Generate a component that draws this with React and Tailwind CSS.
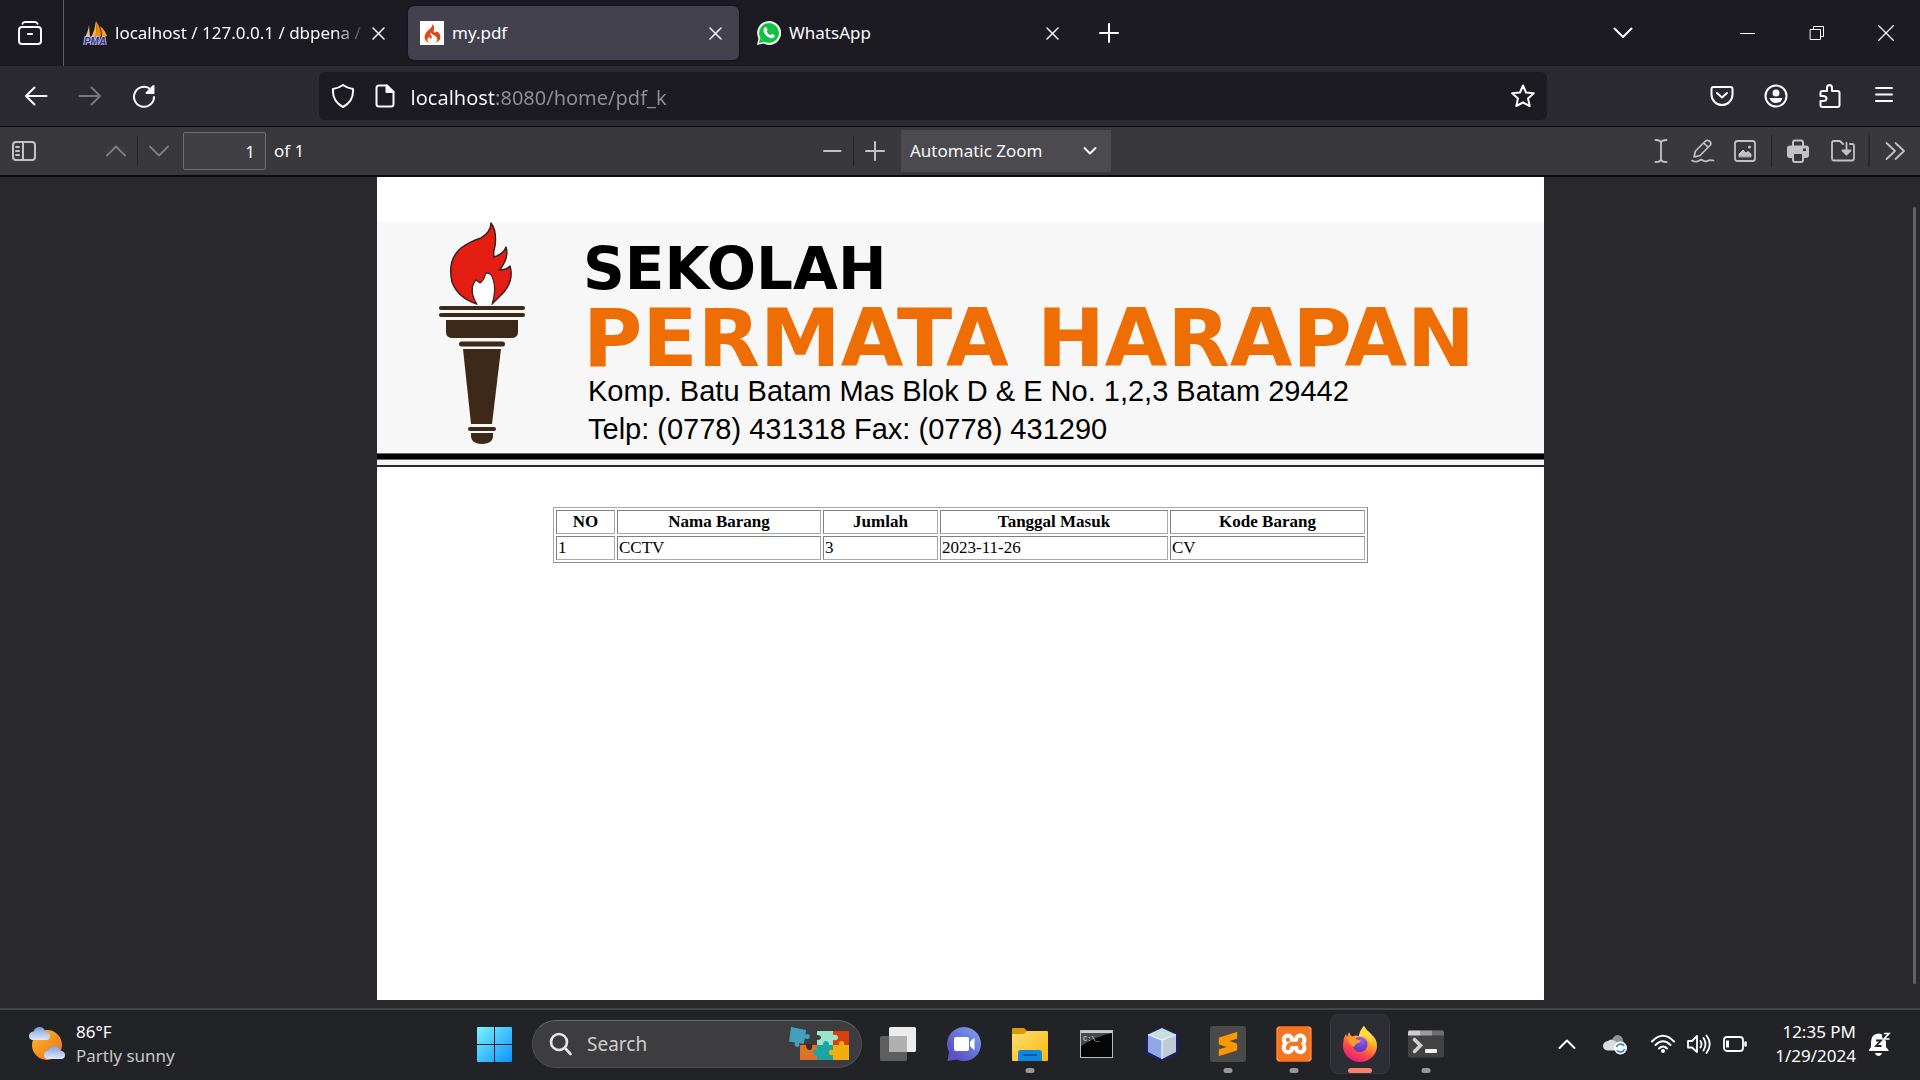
import React from "react";
import { SiCodeigniter, SiSublimetext, SiXampp } from "react-icons/si";

function Line({ size = "size-6", box = "0 0 24 24", w = 2, children }) {
  return (
    <svg
      className={`${size} shrink-0`}
      viewBox={box}
      fill="none"
      stroke="currentColor"
      strokeWidth={w}
      strokeLinecap="round"
      strokeLinejoin="round"
      aria-hidden="true"
    >
      {children}
    </svg>
  );
}

function IconButton({ label, className = "", children }) {
  return (
    <button type="button" aria-label={label} className={`flex items-center justify-center ${className}`}>
      {children}
    </button>
  );
}

function PmaIcon() {
  return (
    <svg className="size-6 shrink-0" viewBox="0 0 24 24" aria-hidden="true">
      <path d="M6 4 Q6.500 11 7 16 L1 18 Q5 12 6 4Z" fill="#f6c27c" />
      <path d="M13 0 Q12 9 8 17 L12.500 16.500 Q14 8 13 0Z" fill="#fbb34a" />
      <path d="M13 0 Q18 7 18 15 L12.500 16.500 Q14 8 13 0Z" fill="#f38a06" />
      <path d="M17 5 Q22 9 24 15 L19 16 Q19 10 17 5Z" fill="#f89c1e" />
      <text
        x="12"
        y="23.500"
        textAnchor="middle"
        className="font-['Liberation_Sans',sans-serif] text-[10px] font-bold italic"
        fill="#34357c"
        stroke="#b9bbe0"
        strokeWidth="2"
        paintOrder="stroke"
      >
        PMA
      </text>
    </svg>
  );
}

function Tab({ icon, title, active, fade }) {
  return (
    <div
      className={`flex h-[54px] w-[331px] items-center rounded-md pr-[14px] pl-3 ${
        active ? "bg-[#42414d] shadow-[0_0_3px_rgba(0,0,0,0.6)]" : ""
      }`}
    >
      {icon}
      <button
        type="button"
        className={`ml-2 min-w-0 flex-1 overflow-hidden text-left text-[17px] whitespace-nowrap text-[#fbfbfe] ${
          fade ? "[mask-image:linear-gradient(90deg,black_86%,transparent_100%)]" : ""
        }`}
      >
        {title}
      </button>
      <IconButton label={`Close ${title}`} className="h-9 w-5">
        <Line size="size-[13px]" box="0 0 13 13" w={1.500}>
          <path d="M1 1 L12 12 M12 1 L1 12" />
        </Line>
      </IconButton>
    </div>
  );
}

function TabBar() {
  return (
    <header className="flex h-[66px] items-center bg-[#1c1b22] text-[#fbfbfe]">
      <IconButton label="View recent browsing" className="h-full w-16 border-r border-[#5b5b66] pr-1">
        <Line>
          <path d="M4.500 2.800 Q5 1 7 1 H17 Q19 1 19.500 2.800" />
          <rect x="1" y="6" width="22" height="17" rx="3" />
          <path d="M10 13 H14" />
        </Line>
      </IconButton>
      <nav className="ml-[7px] flex gap-[6px]" aria-label="Tabs">
        <Tab icon={<PmaIcon />} title="localhost / 127.0.0.1 / dbpena /" fade />
        <Tab
          active
          title="my.pdf"
          icon={
            <span className="flex size-6 items-center justify-center bg-white">
              <SiCodeigniter className="size-[19px] text-[#dd4814]" />
            </span>
          }
        />
        <Tab
          title="WhatsApp"
          icon={
            <svg className="size-6 shrink-0" viewBox="0 0 24 24" aria-hidden="true">
              <path d="M12 0 A12 12 0 1 1 6.500 22.600 L0 24 L1.500 17.500 A12 12 0 0 1 12 0Z" fill="#f4f8f4" />
              <circle cx="12" cy="12" r="10" fill="#12c143" />
              <path d="M3 17 L2 22 L7 21Z" fill="#12c143" />
              <path
                d="M8.200 6 Q9.300 5.700 9.700 6.700 L10.500 8.700 Q10.700 9.400 9.600 10.500 Q11 13.200 13.600 14.300 L14.800 13 Q15.200 12.700 17.600 14.200 Q18 14.600 17.600 15.600 Q16.600 17.700 14 17.300 Q8.500 15.600 6.600 10.600 Q5.900 7.600 8.200 6Z"
                fill="#fff"
              />
            </svg>
          }
        />
      </nav>
      <IconButton label="New tab" className="ml-[9px] size-12">
        <Line size="size-5" box="0 0 20 20">
          <path d="M1 10 H19 M10 1 V19" />
        </Line>
      </IconButton>
      <div className="flex-1" />
      <IconButton label="List all tabs" className="mr-[66px] size-12">
        <Line size="size-5" box="0 0 20 20">
          <path d="M1.500 5.500 L10 14 L18.500 5.500" />
        </Line>
      </IconButton>
      <IconButton label="Minimize" className="h-full w-[69px]">
        <span className="h-px w-[15px] bg-white" />
      </IconButton>
      <IconButton label="Restore" className="h-full w-[69px]">
        <Line size="size-4" box="0 0 16 16" w={1}>
          <path d="M1.500 4.500 H11.500 V14.500 H1.500Z M4.500 4.500 V1.500 H14.500 V11.500 H11.500" />
        </Line>
      </IconButton>
      <IconButton label="Close window" className="h-full w-[69px]">
        <Line size="size-4" box="0 0 16 16" w={1.200}>
          <path d="M0.500 0.500 L15.500 15.500 M15.500 0.500 L0.500 15.500" />
        </Line>
      </IconButton>
    </header>
  );
}

function NavBar() {
  return (
    <div className="flex h-[61px] items-center border-b border-[#0c0c0d] bg-[#2b2a33] px-3 text-[#fbfbfe]">
      <div className="flex gap-[6px]">
        <IconButton label="Back" className="size-12">
          <Line>
            <path d="M2 12 H22.500 M10.500 3.500 L2 12 L10.500 20.500" />
          </Line>
        </IconButton>
        <IconButton label="Forward" className="size-12 text-[#77767e]">
          <Line>
            <path d="M1.500 12 H22 M13.500 3.500 L22 12 L13.500 20.500" />
          </Line>
        </IconButton>
        <IconButton label="Reload" className="size-12">
          <Line>
            <path d="M22 13 A10 10 0 1 1 18.500 5.200" />
            <path d="M21.500 2 V9 H14.500Z" fill="currentColor" />
          </Line>
        </IconButton>
      </div>
      <div className="flex-1" />
      <div className="flex h-12 flex-[8] items-center rounded-md bg-[#1c1b22] pr-3 pl-3">
        <IconButton label="Tracking protection">
          <Line>
            <path d="M12 1 Q16 4 22 5 Q23 17 12 23 Q1 17 2 5 Q8 4 12 1Z" />
          </Line>
        </IconButton>
        <IconButton label="Site information" className="ml-[18px]">
          <Line>
            <path d="M14 1.500 H6 Q3.500 1.500 3.500 4 V20 Q3.500 22.500 6 22.500 H18 Q20.500 22.500 20.500 20 V8Z" />
            <path d="M13.500 1.500 V8 H20.500Z" fill="currentColor" />
          </Line>
        </IconButton>
        <input
          type="text"
          aria-label="Address"
          defaultValue="localhost:8080/home/pdf_k"
          className="ml-[14px] h-12 min-w-0 flex-1 bg-[linear-gradient(90deg,#fbfbfe_84px,#8f8f98_84px)] bg-clip-text pt-[2px] text-[20px] text-transparent outline-none"
        />
        <IconButton label="Bookmark this page">
          <Line>
            <path d="M12 1.500 L15 8.500 L22.800 9.200 L17 14.400 L18.700 22 L12 18.500 L5.300 22 L7 14.400 L1.200 9.200 L9 8.500Z" />
          </Line>
        </IconButton>
      </div>
      <div className="flex-1" />
      <div className="flex gap-[6px]">
        <IconButton label="Save to Pocket" className="size-12">
          <Line>
            <path d="M3.500 3 H20.500 Q22.500 3 22.500 5 V10.500 A10.500 10.500 0 0 1 1.500 10.500 V5 Q1.500 3 3.500 3Z" />
            <path d="M7 9 L12 13.500 L17 9" />
          </Line>
        </IconButton>
        <IconButton label="Account" className="size-12">
          <Line>
            <circle cx="12" cy="12" r="10.500" />
            <circle cx="12" cy="9" r="3.500" fill="currentColor" stroke="none" />
            <path d="M5.500 14 H18.500 Q17 19 12 19 Q7 19 5.500 14Z" fill="currentColor" stroke="none" />
          </Line>
        </IconButton>
        <IconButton label="Extensions" className="size-12">
          <Line>
            <path d="M2.500 12 V9 Q2.500 7 4.500 7 H9 V4 Q9 1 11.500 1 Q14 1 14 4 V7 H19.500 Q21.500 7 21.500 9 V21 Q21.500 23 19.500 23 H4.500 Q2.500 23 2.500 21 V17 H5 Q8.500 17 8.500 14.500 Q8.500 12 5 12Z" />
          </Line>
        </IconButton>
        <IconButton label="Open application menu" className="size-12">
          <Line>
            <path d="M4 4 H20 M4 10.500 H20 M4 17 H20" />
          </Line>
        </IconButton>
      </div>
    </div>
  );
}

function PdfToolbar() {
  return (
    <div className="grid h-[50px] grid-cols-[1fr_auto_1fr] items-center border-b-2 border-[#0c0c0d] bg-[#38383d] text-[17px] text-[#f9f9fa]">
      <div className="flex items-center pl-[3px]">
        <IconButton label="Toggle sidebar" className="size-[42px] text-[#c2c2c4]">
          <Line>
            <rect x="1" y="3" width="22" height="18" rx="3" />
            <path d="M11 3 V21 M4 8 H7 M4 12 H7 M4 16 H7" />
          </Line>
        </IconButton>
        <IconButton label="Previous page" className="ml-[50px] size-[42px] text-[#808084]">
          <Line size="size-5" box="0 0 20 20" w={1.800}>
            <path d="M1 14.500 L10 5.500 L19 14.500" />
          </Line>
        </IconButton>
        <span className="h-[30px] w-px bg-[#232327]" />
        <IconButton label="Next page" className="size-[42px] text-[#808084]">
          <Line size="size-5" box="0 0 20 20" w={1.800}>
            <path d="M1 5.500 L10 14.500 L19 5.500" />
          </Line>
        </IconButton>
        <label className="ml-[3px] flex items-center gap-2">
          <input
            type="text"
            aria-label="Page"
            defaultValue="1"
            className="h-[38px] w-[83px] rounded-[2px] border border-[#6f6f74] bg-[#404044] pr-[10px] text-right outline-none"
          />
          of 1
        </label>
      </div>
      <div className="flex items-center pl-[2px]">
        <IconButton label="Zoom out" className="size-[42px] text-[#c2c2c4]">
          <Line size="size-5" box="0 0 20 20">
            <path d="M2 10 H18.500" />
          </Line>
        </IconButton>
        <span className="h-[30px] w-px bg-[#232327]" />
        <IconButton label="Zoom in" className="size-[42px] text-[#c2c2c4]">
          <Line size="size-5" box="0 0 20 20">
            <path d="M1 10 H19 M10 1 V19" />
          </Line>
        </IconButton>
        <div className="relative ml-[5px]">
          <select
            aria-label="Zoom"
            className="h-[42px] w-[210px] appearance-none bg-[#4a4a4f] pl-[9px] outline-none"
          >
            <option>Automatic Zoom</option>
          </select>
          <span className="pointer-events-none absolute top-[13px] right-[13px]">
            <Line size="size-4" box="0 0 16 16">
              <path d="M2.500 5 L8 10.500 L13.500 5" />
            </Line>
          </span>
        </div>
      </div>
      <div className="flex items-center justify-end pr-1 text-[#c2c2c4]">
        <IconButton label="Text" className="size-[42px]">
          <Line w={1.800}>
            <path d="M6.500 1 Q12 1 12 4 Q12 1 17.500 1 M12 4 V20 M6.500 23 Q12 23 12 20 Q12 23 17.500 23" />
          </Line>
        </IconButton>
        <IconButton label="Draw" className="size-[42px]">
          <Line w={1.700}>
            <path d="M3 18 L4.500 12 L14.500 2 Q16.500 0.500 18.500 2.200 Q21 4.500 19 6.500 L9 16.500Z M12.800 4 L17 8.200" />
            <path d="M1 21.500 Q5 24 8.500 21.500 Q10 20 12 21.500 Q14 23 16 22 Q19 20.500 22.500 21.500" />
          </Line>
        </IconButton>
        <IconButton label="Add or edit images" className="size-[42px]">
          <Line w={1.800}>
            <rect x="2" y="2" width="20" height="20" rx="2.500" />
            <path d="M6 17.500 V15 L10 11 L13 14 L15 12.500 L18 15 V17.500Z" fill="currentColor" strokeWidth="1" />
            <circle cx="16.500" cy="8" r="1.500" fill="currentColor" stroke="none" />
          </Line>
        </IconButton>
        <span className="mx-[5px] h-8 w-px bg-[#232327]" />
        <IconButton label="Print" className="size-[42px]">
          <svg className="size-6" viewBox="0 0 24 24" aria-hidden="true">
            <path d="M7 7 V3.500 Q7 1.500 9 1.500 H15 Q17 1.500 17 3.500 V7" fill="none" stroke="currentColor" strokeWidth="2" />
            <path
              d="M4 6.500 H20 Q23 6.500 23 9.500 V16 Q23 19 20 19 H18 V21 Q18 24 15 24 H9 Q6 24 6 21 V19 H4 Q1 19 1 16 V9.500 Q1 6.500 4 6.500Z M8 15 V21 Q8 22 9 22 H15 Q16 22 16 21 V15Z M17 9.500 V12 H20 V9.500Z"
              fill="currentColor"
              fillRule="evenodd"
            />
          </svg>
        </IconButton>
        <IconButton label="Save" className="ml-[3px] size-[42px]">
          <Line w={1.800}>
            <path d="M12 5 L9 2 H3 Q1 2 1 4 V19 Q1 21.500 3 21.500 H21 Q23 21.500 23 19 V7 Q23 5 21 5 H19" />
            <path d="M15.500 4 V12" />
            <path d="M11.500 11.500 H19.500 L15.500 15.500Z" fill="currentColor" />
          </Line>
        </IconButton>
        <span className="mx-1 h-8 w-[2px] bg-[#2a2a2e]" />
        <IconButton label="Tools" className="size-[42px]">
          <Line size="size-5" box="0 0 20 20" w={1.800}>
            <path d="M1.500 2 L10 10 L1.500 18 M10.500 2 L19 10 L10.500 18" />
          </Line>
        </IconButton>
      </div>
    </div>
  );
}

function Torch() {
  return (
    <svg className="h-[223px] w-[90px] shrink-0" viewBox="0 0 90 223" role="img" aria-label="Torch">
      <path
        d="M54 1 Q60 9 58 24 Q56 30 57 35 Q67 32 69 25 Q72 35 64 46 Q63 49 62 48 Q70 48 73 44 Q77 58 67 70 L55 82 Q60 66 55 55 Q53 51 49 51 Q48 58 43 61 L39 58 Q31 68 40 82 Q21 76 15 60 Q10 38 24 26 Q34 19 44 16 Q54 10 54 1Z"
        fill="#e41e13"
        stroke="#3b2020"
        strokeWidth="1.500"
        strokeLinejoin="round"
      />
      <path d="M40.500 82 Q32 68 39 59 L43 62 Q48 58 49 52 Q53 51 55 56 Q59 67 54.500 82Z" fill="#fff" />
      <g fill="#3d2918">
        <rect x="2" y="84" width="86" height="4" rx="2" />
        <rect x="2" y="91" width="86" height="4" rx="2" />
        <path d="M9 98 H81 V110 Q81 116 74 116 H16 Q9 116 9 110Z" />
        <rect x="22" y="119.500" width="46" height="5" rx="2.500" />
        <path d="M26 127 H64 L55 202 H34Z" />
        <rect x="31" y="205" width="28" height="4" rx="2" />
        <path d="M34 211 H56 V215 Q55 222 45 222 Q35 222 34 215Z" />
      </g>
    </svg>
  );
}

function Letterhead() {
  return (
    <div className="mt-[45px]">
      <div className="flex h-[231px] bg-[#f7f7f7] pl-[60px] text-black">
        <Torch />
        <div className="ml-14 whitespace-nowrap">
          <h1 className="pt-3 font-['DejaVu_Sans',Verdana,sans-serif] font-bold">
            <span className="block text-[58px] leading-[70px]">SEKOLAH</span>
            <span className="block text-[81px] leading-[68px] text-[#ee6e04]">PERMATA HARAPAN</span>
          </h1>
          <div className="pl-[5px] font-['Liberation_Sans',Arial,sans-serif] text-[29px] leading-[38px]">
            <p>Komp. Batu Batam Mas Blok D &amp; E No. 1,2,3 Batam 29442</p>
            <p>Telp: (0778) 431318 Fax: (0778) 431290</p>
          </div>
        </div>
      </div>
      <div className="flex h-[14px] flex-col border-b-2 border-[#2a2a2a] bg-[#f2f2f2]">
        <div className="h-[7px] border-y border-[#6b6b6b] bg-black" />
      </div>
    </div>
  );
}

const columns = ["NO", "Nama Barang", "Jumlah", "Tanggal Masuk", "Kode Barang"];
const rows = [["1", "CCTV", "3", "2023-11-26", "CV"]];
const cell =
  "h-6 border border-t-[#808080] border-l-[#808080] border-r-[#a9a9a9] border-b-[#a9a9a9] px-px py-0 leading-[22px]";

function ItemTable() {
  return (
    <table className="mx-auto mt-10 w-[815px] table-fixed border-separate border-spacing-[2px] border border-t-[#a9a9a9] border-r-[#8c8c8c] border-b-[#8c8c8c] border-l-[#a9a9a9] font-['Liberation_Serif','Times_New_Roman',serif] text-[17px] text-black">
      <colgroup>
        <col className="w-[59px]" />
        <col className="w-[204px]" />
        <col className="w-[115px]" />
        <col className="w-[228px]" />
        <col />
      </colgroup>
      <thead>
        <tr>
          {columns.map((c) => (
            <th key={c} scope="col" className={`${cell} text-center font-bold`}>
              {c}
            </th>
          ))}
        </tr>
      </thead>
      <tbody>
        {rows.map((r) => (
          <tr key={r[0]}>
            {r.map((v) => (
              <td key={v} className={cell}>
                {v}
              </td>
            ))}
          </tr>
        ))}
      </tbody>
    </table>
  );
}

function Viewer() {
  return (
    <main className="flex flex-1 bg-[#2a2a2e] pb-2">
      <div className="flex-1 pl-[5px]" />
      <article className="w-full max-w-[1167px] bg-white">
        <Letterhead />
        <ItemTable />
      </article>
      <div className="flex flex-1 justify-end pt-[30px] pr-1 pb-4">
        <div className="w-[3px] rounded-full bg-[#626266]" />
      </div>
    </main>
  );
}

function Cloud({ x, y }) {
  return (
    <g transform={`translate(${x} ${y})`}>
      <path d="M4 13 Q0 13 0 9 Q0 5 4.500 4.500 Q6 0 10.500 0 Q15 0 16 4.500 Q21 5 21 9 Q21 13 17 13Z" fill="url(#cloud)" />
    </g>
  );
}

function WeatherIcon() {
  return (
    <svg className="h-[34px] w-9 shrink-0" viewBox="0 0 36 34" aria-hidden="true">
      <defs>
        <linearGradient id="sun" x1="0" y1="0" x2="1" y2="1">
          <stop offset="0" stopColor="#f9bd2f" />
          <stop offset="1" stopColor="#ef6c12" />
        </linearGradient>
        <linearGradient id="cloud" x1="0" y1="0" x2="0" y2="1">
          <stop offset="0" stopColor="#7d9fdf" />
          <stop offset="1" stopColor="#dfe9fa" />
        </linearGradient>
      </defs>
      <circle cx="18" cy="18" r="15" fill="url(#sun)" />
      <Cloud x="0" y="0" />
      <Cloud x="15" y="19" />
    </svg>
  );
}

function TaskButton({ label, running, active, children }) {
  return (
    <button
      type="button"
      aria-label={label}
      className={`relative flex size-[60px] items-center justify-center rounded-lg ${
        active ? "border border-[#38393f] bg-[#2d2e34]" : ""
      }`}
    >
      {children}
      {running && (
        <span
          className={`absolute left-1/2 h-[5px] -translate-x-1/2 rounded-full ${
            active ? "bottom-0 w-6 bg-[#f5836b]" : "bottom-px w-[9px] bg-[#98989a]"
          }`}
        />
      )}
    </button>
  );
}

function Puzzle() {
  return (
    <svg className="h-9 w-[60px] shrink-0" viewBox="0 0 60 36" aria-hidden="true">
      <path d="M2 1 L17 4 L16.500 8.500 Q21 7 21 10.500 Q21 14 16 12.500 L14.500 18 L10 17 Q11.500 21 8 21 Q4.500 20 6 16.500 L0 15.500Z" fill="#43a0bd" />
      <path d="M11 19 H28 V34 H11Z" fill="#dd7328" />
      <path d="M17 18 Q17 24 20.500 24 Q24 24 23 18Z" fill="#3a2a24" />
      <path d="M28 5 H44 V19 H28 V14 Q32 14 32 11.500 Q32 9 28 9Z" fill="#9ce4c8" />
      <path d="M44 5 H60 V19 H44Z" fill="#d8410f" />
      <path d="M44 9 Q49 8 49 11.500 Q49 15 44 14Z" fill="#9ce4c8" />
      <path d="M28 19 H44 V34 H28 V29 Q24 30 24 26.500 Q24 23 28 24Z" fill="#1ba3a6" />
      <path d="M34 19 Q34 15 37 15 Q40 15 40 19Z" fill="#1ba3a6" />
      <path d="M44 19 H60 V34 H44 V29 Q40 30 40 26.500 Q40 23 44 24Z" fill="#f2ae10" />
      <path d="M50 19.500 Q49 15 52.500 15 Q56 15 55 19.500Z" fill="#f2ae10" />
    </svg>
  );
}

function TaskbarApps() {
  return (
    <div className="flex items-center">
      <TaskButton label="Start">
        <svg className="size-[35px]" viewBox="0 0 35 35" aria-hidden="true">
          <defs>
            <linearGradient id="win" x1="0" y1="0" x2="35" y2="35" gradientUnits="userSpaceOnUse">
              <stop offset="0" stopColor="#7cf3fe" />
              <stop offset="1" stopColor="#0a92fb" />
            </linearGradient>
          </defs>
          <path
            d="M1 0 H17 V17 H0 V1 Q0 0 1 0Z M18 0 H34 Q35 0 35 1 V17 H18Z M0 18 H17 V35 H1 Q0 35 0 34Z M18 18 H35 V34 Q35 35 34 35 H18Z"
            fill="url(#win)"
          />
        </svg>
      </TaskButton>
      <label className="mr-[6px] ml-2 flex h-12 w-[330px] items-center rounded-full border border-[#505052] border-t-[#67676a] bg-[#3d3d3f] pr-3 pl-4">
        <Line size="size-6" w={2.600}>
          <circle cx="10" cy="10" r="8" stroke="#e6e6e6" />
          <path d="M16 16 L21.500 22" stroke="#e6e6e6" />
        </Line>
        <input
          type="search"
          placeholder="Search"
          aria-label="Search"
          className="ml-[14px] min-w-0 flex-1 bg-transparent text-[19px] text-[#cfcfcf] outline-none placeholder:text-[#cfcfcf]"
        />
        <Puzzle />
      </label>
      <div className="flex gap-[6px]">
        <TaskButton label="Task view">
          <svg className="size-9" viewBox="0 0 36 36" aria-hidden="true">
            <rect x="9" y="1" width="27" height="25" rx="1.500" fill="#ececec" />
            <rect x="0" y="10" width="27" height="25" rx="1.500" fill="#5e5e5e" />
            <path d="M9 10 H27 V26 H9Z" fill="#b0b0b0" />
          </svg>
        </TaskButton>
        <TaskButton label="Chat">
          <svg className="size-9" viewBox="0 0 36 36" aria-hidden="true">
            <defs>
              <linearGradient id="chat" x1="0" y1="1" x2="1" y2="0">
                <stop offset="0.200" stopColor="#5b52c4" />
                <stop offset="1" stopColor="#7fa6f2" />
              </linearGradient>
            </defs>
            <path d="M18 1 A17 17 0 1 1 11 33.500 L1.500 35 L3 26 A17 17 0 0 1 18 1Z" fill="url(#chat)" />
            <rect x="8" y="11" width="15" height="14" rx="2" fill="#fff" />
            <path d="M24.500 16 L28 12.500 V23.500 L24.500 20Z" fill="#fff" stroke="#fff" strokeLinejoin="round" />
          </svg>
        </TaskButton>
        <TaskButton label="File Explorer" running>
          <svg className="size-9" viewBox="0 0 36 36" aria-hidden="true">
            <defs>
              <linearGradient id="folder" x1="0" y1="0" x2="1" y2="1">
                <stop offset="0" stopColor="#ffdf73" />
                <stop offset="1" stopColor="#fbb90c" />
              </linearGradient>
            </defs>
            <path d="M0 3 Q0 2 1 2 H12 L15 5 V9 H0Z" fill="#dd9a06" />
            <path d="M0 8 H12 L15 5 H35 Q36 5 36 6 V34 Q36 35 35 35 H1 Q0 35 0 34Z" fill="url(#folder)" />
            <path d="M6 35 V27 Q6 24 9 24 H27 Q30 24 30 27 V35Z" fill="#1086dd" />
            <path d="M10.500 29 H25" stroke="#0a4d96" strokeWidth="1.500" />
          </svg>
        </TaskButton>
        <TaskButton label="Command Prompt">
          <svg className="h-7 w-[33px]" viewBox="0 0 33 28" aria-hidden="true">
            <rect x="0.500" y="0.500" width="32" height="27" fill="#050505" stroke="#b6bcc2" />
            <path d="M1 1 H32 V3 H1Z" fill="#c9ced3" />
            <path d="M1 3 H32 Q14 7 1 16Z" fill="#48494b" />
            <text x="3" y="11" fill="#e4e4e4" className="font-['Liberation_Mono',monospace] text-[7px]">
              C:\_
            </text>
          </svg>
        </TaskButton>
        <TaskButton label="NetBeans">
          <svg className="size-9" viewBox="0 0 36 36" aria-hidden="true">
            <path d="M18 2 L33 9 V27 L18 34 L3 27 V9Z" fill="#1c2470" stroke="#1c2066" strokeWidth="3" strokeLinejoin="round" />
            <path d="M18 2 L32 8.500 L18 14 L4 8.500Z" fill="#c7dfdc" />
            <path d="M4 8.500 L18 14 V33 L4 26Z" fill="#8fa9e6" />
            <path d="M32 8.500 L18 14 V33 L32 26Z" fill="#bfcbd4" />
            <path d="M4 8.500 L18 14 L32 8.500 M18 14 V33" fill="none" stroke="#eef4ff" strokeWidth="1.200" />
          </svg>
        </TaskButton>
        <TaskButton label="Sublime Text" running>
          <span className="flex size-9 items-center justify-center rounded-[3px] bg-[#4a4a4a]">
            <SiSublimetext className="size-6 text-[#ff9800]" />
          </span>
        </TaskButton>
        <TaskButton label="XAMPP" running>
          <span className="flex size-9 items-center justify-center rounded-[4px] border border-[#d85a14] bg-white">
            <SiXampp className="size-[34px] text-[#f37623]" />
          </span>
        </TaskButton>
        <TaskButton label="Firefox" running active>
          <svg className="size-9" viewBox="0 0 36 36" aria-hidden="true">
            <defs>
              <linearGradient id="ffx" x1="0.800" y1="0" x2="0.300" y2="1">
                <stop offset="0.050" stopColor="#fff24a" />
                <stop offset="0.400" stopColor="#ffa52a" />
                <stop offset="0.700" stopColor="#ff4a45" />
                <stop offset="1" stopColor="#e5168a" />
              </linearGradient>
              <radialGradient id="ffg" cx="0.600" cy="0.200" r="0.900">
                <stop offset="0" stopColor="#9a5bf5" />
                <stop offset="1" stopColor="#4a34b8" />
              </radialGradient>
            </defs>
            <path
              d="M22 0 Q24 4 28 7 L30 9 Q35 13 35 20 A17 16 0 0 1 1 20 Q1 12 4 8 L5 11 L7 6 Q8 9 10 10.500 Q14 9 17 10 Q18 4 22 0Z"
              fill="url(#ffx)"
            />
            <circle cx="18" cy="18.500" r="7.500" fill="url(#ffg)" />
            <path d="M5 12 Q11 9 13.500 13 L19 14.500 Q18 17 14.500 17.500 Q13 19 12 21 Q6 17 5 12Z" fill="#ff9a2b" />
            <path d="M17 10 Q18 4 22 0 Q24 4 28 7 Q31 12 29 17 Q25 9 17 10Z" fill="#ffdc3e" />
          </svg>
        </TaskButton>
        <TaskButton label="Terminal" running>
          <svg className="h-7 w-9" viewBox="0 0 36 28" aria-hidden="true">
            <rect y="0.500" width="36" height="27" rx="1.500" fill="#424242" />
            <path d="M1 0.500 H12 V5.500 H0 V1.500Z" fill="#cfcfcf" />
            <path d="M12 0.500 H24 V5.500 H12Z" fill="#9c9c9c" />
            <path d="M24 0.500 H35 L36 1.500 V5.500 H24Z" fill="#6e6e6e" />
            <path d="M6.500 9.500 L12.500 15.500 L6.500 21.500" fill="none" stroke="#cfcfcf" strokeWidth="3.600" strokeLinecap="round" />
            <rect x="17" y="19" width="12" height="4" rx="1" fill="#f2f2f2" />
          </svg>
        </TaskButton>
      </div>
    </div>
  );
}

function Tray() {
  return (
    <div className="flex items-center justify-end pr-7 text-white">
      <IconButton label="Show hidden icons" className="mr-[26px]">
        <Line size="size-5" box="0 0 20 20">
          <path d="M2.500 14 L10 6.500 L17.500 14" />
        </Line>
      </IconButton>
      <IconButton label="OneDrive" className="mr-6">
        <svg className="size-6" viewBox="0 0 24 24" aria-hidden="true">
          <path d="M9 8 Q11 3 15 3 Q20 4 20 9 L23 14 H10Z" fill="#929292" />
          <path d="M4.500 18.500 Q0 18 0 13.500 Q0.500 9.500 5 9 Q8 6 12 9 L18 13 V18.500Z" fill="#dcdcdc" />
          <circle cx="17.500" cy="16" r="6.500" fill="#fff" />
          <path d="M13.500 15 A4.200 4.200 0 0 1 21 13.800 M21.500 17 A4.200 4.200 0 0 1 14 18.200" fill="none" stroke="#1a78d0" strokeWidth="1.500" />
        </svg>
      </IconButton>
      <button type="button" aria-label="Network, sound and battery" className="flex gap-3">
        <Line w={2}>
          <path d="M1 9.500 Q12 -2 23 9.500 M4.500 13 Q12 5.500 19.500 13 M8 16.500 Q12 12.500 16 16.500" />
          <circle cx="12" cy="19" r="1" fill="currentColor" />
        </Line>
        <Line w={1.800}>
          <path d="M1 9 H5 L10 4 V20 L5 15.500 H1Z M13.500 9 Q15.500 12 13.500 15.500 M16.500 6 Q20.500 12 16.500 18.500 M19.500 3.500 Q26 12 19.500 21" />
        </Line>
        <Line w={1.800}>
          <rect x="1" y="5" width="19" height="14" rx="3" />
          <path d="M4.500 8.500 V15.500" strokeWidth="3" strokeLinecap="butt" />
          <path d="M22.500 10.500 V13.500" strokeWidth="2.500" />
        </Line>
      </button>
      <div className="ml-7 text-right text-[17px] leading-6">
        <div>12:35 PM</div>
        <div>1/29/2024</div>
      </div>
      <IconButton label="Notifications" className="ml-3">
        <svg className="size-6" viewBox="0 0 24 24" aria-hidden="true">
          <path d="M1 19 V18 L3 15 V10 Q3 2 10.500 1.500 Q18 2 18 10 V15 L20.500 18 V19Z" fill="#fff" />
          <path d="M7 21 H14 Q13 24 10.500 24 Q8 24 7 21Z" fill="#fff" />
          <circle cx="18.500" cy="4" r="4.500" fill="#222327" />
          <path d="M8 8.500 H13 L8 14 H13.500" fill="none" stroke="#222327" strokeWidth="1.800" />
          <path d="M16 1.500 H21 L16 7 H21.500" fill="none" stroke="#fff" strokeWidth="1.600" />
        </svg>
      </IconButton>
    </div>
  );
}

function Taskbar() {
  return (
    <footer className="grid h-[72px] grid-cols-[1fr_auto_1fr] items-center border-t-2 border-[#454547] bg-[#222327] pb-[2px]">
      <button type="button" className="flex items-center gap-[11px] pl-[29px] text-left text-[17px] leading-6">
        <WeatherIcon />
        <span>
          <span className="block text-white">86°F</span>
          <span className="block text-[#c8c8ca]">Partly sunny</span>
        </span>
      </button>
      <TaskbarApps />
      <Tray />
    </footer>
  );
}

export default function App() {
  return (
    <div className="flex min-h-screen flex-col font-['Noto_Sans','Open_Sans',sans-serif]">
      <TabBar />
      <NavBar />
      <PdfToolbar />
      <Viewer />
      <Taskbar />
    </div>
  );
}
